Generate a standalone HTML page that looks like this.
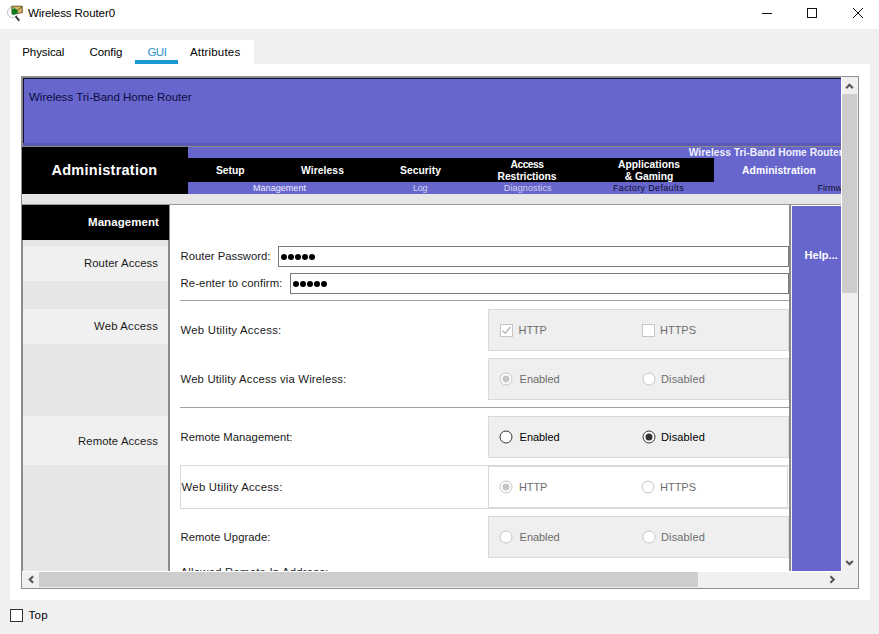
<!DOCTYPE html>
<html><head><meta charset="utf-8"><style>
html,body{margin:0;padding:0;}
body{width:879px;height:634px;overflow:hidden;background:#f0f0f0;position:relative;font-family:"Liberation Sans", sans-serif;}
</style></head><body>
<div style="position:absolute;left:0px;top:0px;width:879px;height:29px;background:#fff;"></div><div style="position:absolute;left:28.00px;top:8.37px;font-size:11.5px;line-height:11.5px;font-weight:normal;color:#000;letter-spacing:-0.075px;white-space:pre;">Wireless Router0</div><div style="position:absolute;left:10px;top:40px;width:244px;height:24px;background:#fff;"></div><div style="position:absolute;left:22.30px;top:47.27px;font-size:11.5px;line-height:11.5px;font-weight:normal;color:#000;letter-spacing:-0.104px;white-space:pre;">Physical</div><div style="position:absolute;left:89.40px;top:47.27px;font-size:11.5px;line-height:11.5px;font-weight:normal;color:#000;letter-spacing:-0.042px;white-space:pre;">Config</div><div style="position:absolute;left:147.40px;top:47.27px;font-size:11.5px;line-height:11.5px;font-weight:normal;color:#2e90c8;letter-spacing:-0.484px;white-space:pre;">GUI</div><div style="position:absolute;left:190.00px;top:47.27px;font-size:11.5px;line-height:11.5px;font-weight:normal;color:#000;letter-spacing:0.172px;white-space:pre;">Attributes</div><div style="position:absolute;left:135px;top:60px;width:43px;height:4px;background:#1a97d5;"></div><div style="position:absolute;left:10px;top:64px;width:860px;height:536px;background:#fff;"></div><div style="position:absolute;left:21px;top:76px;width:838px;height:513px;border:1px solid #8f8f8f;box-sizing:border-box;"></div><div style="position:absolute;left:22px;top:77px;width:819px;height:70px;background:#8a8a8a;"></div><div style="position:absolute;left:23px;top:78px;width:818px;height:65px;background:#0d0d3a;"></div><div style="position:absolute;left:24px;top:79px;width:817px;height:64px;background:#6666cc;"></div><div style="position:absolute;left:23px;top:143px;width:818px;height:3px;background:#5a5ab4;"></div><div style="position:absolute;left:29.00px;top:92.27px;font-size:11.5px;line-height:11.5px;font-weight:normal;color:#0c0c40;letter-spacing:0.006px;white-space:pre;">Wireless Tri-Band Home Router</div><div style="position:absolute;left:22px;top:147px;width:166px;height:47px;background:#000;"></div><div style="position:absolute;left:51.50px;top:163.43px;font-size:14.5px;line-height:14.5px;font-weight:bold;color:#fff;letter-spacing:0.263px;white-space:pre;">Administration</div><div style="position:absolute;left:188px;top:147px;width:653px;height:11px;background:#6666cc;"></div><div style="position:absolute;left:22px;top:77px;width:819px;height:494px;overflow:hidden"><div style="position:absolute;left:666.75px;top:70.68px;font-size:10.3px;line-height:10.3px;font-weight:bold;color:#f0f0ff;letter-spacing:-0.014px;white-space:pre;">Wireless Tri-Band Home Router</div></div><div style="position:absolute;left:188px;top:158px;width:526px;height:24px;background:#000;"></div><div style="position:absolute;left:714px;top:158px;width:127px;height:24px;background:#6666cc;"></div><div style="position:absolute;left:215.95px;top:165.78px;font-size:10.3px;line-height:10.3px;font-weight:bold;color:#fff;letter-spacing:0.018px;white-space:pre;">Setup</div><div style="position:absolute;left:301.00px;top:165.78px;font-size:10.3px;line-height:10.3px;font-weight:bold;color:#fff;letter-spacing:0.092px;white-space:pre;">Wireless</div><div style="position:absolute;left:400.00px;top:165.78px;font-size:10.3px;line-height:10.3px;font-weight:bold;color:#fff;letter-spacing:0.045px;white-space:pre;">Security</div><div style="position:absolute;left:510.50px;top:159.78px;font-size:10.3px;line-height:10.3px;font-weight:bold;color:#fff;letter-spacing:-0.513px;white-space:pre;">Access</div><div style="position:absolute;left:497.50px;top:171.78px;font-size:10.3px;line-height:10.3px;font-weight:bold;color:#fff;letter-spacing:-0.043px;white-space:pre;">Restrictions</div><div style="position:absolute;left:618.00px;top:159.78px;font-size:10.3px;line-height:10.3px;font-weight:bold;color:#fff;letter-spacing:0.017px;white-space:pre;">Applications</div><div style="position:absolute;left:624.80px;top:171.78px;font-size:10.3px;line-height:10.3px;font-weight:bold;color:#fff;letter-spacing:-0.030px;white-space:pre;">&amp; Gaming</div><div style="position:absolute;left:742.00px;top:165.58px;font-size:10.3px;line-height:10.3px;font-weight:bold;color:#fff;letter-spacing:0.096px;white-space:pre;">Administration</div><div style="position:absolute;left:188px;top:182px;width:653px;height:12px;background:#6666cc;"></div><div style="position:absolute;left:253.00px;top:183.58px;font-size:9px;line-height:9px;font-weight:normal;color:#eeeeff;letter-spacing:0.045px;white-space:pre;">Management</div><div style="position:absolute;left:412.95px;top:183.58px;font-size:9px;line-height:9px;font-weight:normal;color:#d2d2ee;letter-spacing:-0.177px;white-space:pre;">Log</div><div style="position:absolute;left:503.75px;top:183.58px;font-size:9px;line-height:9px;font-weight:normal;color:#d2d2ee;letter-spacing:0.134px;white-space:pre;">Diagnostics</div><div style="position:absolute;left:613.00px;top:183.58px;font-size:9px;line-height:9px;font-weight:normal;color:#10102e;letter-spacing:0.342px;white-space:pre;">Factory Defaults</div><div style="position:absolute;left:22px;top:77px;width:819px;height:494px;overflow:hidden"><div style="position:absolute;left:795.50px;top:106.58px;font-size:9px;line-height:9px;font-weight:normal;color:#10102e;letter-spacing:0.000px;white-space:pre;">Firmware Upgrade</div></div><div style="position:absolute;left:22px;top:194px;width:819px;height:10px;background:#e6e6e6;"></div><div style="position:absolute;left:22px;top:204px;width:819px;height:1px;background:#9a9a9a;"></div><div style="position:absolute;left:22px;top:205px;width:148px;height:366px;background:#e6e6e6;"></div><div style="position:absolute;left:22px;top:205px;width:1px;height:366px;background:#8a8a8a;"></div><div style="position:absolute;left:168px;top:205px;width:2px;height:366px;background:#8a8a8a;"></div><div style="position:absolute;left:22px;top:205px;width:147px;height:35px;background:#000;"></div><div style="position:absolute;left:88.00px;top:217.27px;font-size:11.5px;line-height:11.5px;font-weight:bold;color:#fff;letter-spacing:0.070px;white-space:pre;">Management</div><div style="position:absolute;left:23px;top:246px;width:145px;height:35px;background:#f0f0f0;"></div><div style="position:absolute;left:84.00px;top:258.43px;font-size:11.3px;line-height:11.3px;font-weight:normal;color:#1a1a1a;letter-spacing:0.089px;white-space:pre;">Router Access</div><div style="position:absolute;left:23px;top:309px;width:145px;height:35px;background:#f0f0f0;"></div><div style="position:absolute;left:94.00px;top:321.03px;font-size:11.3px;line-height:11.3px;font-weight:normal;color:#1a1a1a;letter-spacing:0.205px;white-space:pre;">Web Access</div><div style="position:absolute;left:23px;top:416px;width:145px;height:49px;background:#f0f0f0;"></div><div style="position:absolute;left:78.00px;top:436.43px;font-size:11.3px;line-height:11.3px;font-weight:normal;color:#1a1a1a;letter-spacing:0.117px;white-space:pre;">Remote Access</div><div style="position:absolute;left:170px;top:205px;width:619px;height:366px;background:#fff;"></div><div style="position:absolute;left:789px;top:205px;width:2px;height:366px;background:#8a8a8a;"></div><div style="position:absolute;left:791px;top:205px;width:1px;height:366px;background:#f4f4f4;"></div><div style="position:absolute;left:792px;top:206px;width:49px;height:365px;background:#6666cc;"></div><div style="position:absolute;left:804.50px;top:250.39px;font-size:11px;line-height:11px;font-weight:bold;color:#fff;letter-spacing:0.069px;white-space:pre;">Help...</div><div style="position:absolute;left:180.50px;top:251.43px;font-size:11.3px;line-height:11.3px;font-weight:normal;color:#1a1a1a;letter-spacing:0.013px;white-space:pre;">Router Password:</div><div style="position:absolute;left:278px;top:246px;width:511px;height:21px;background:#fff;border:1px solid #7a7a7a;box-sizing:border-box;"></div><div style="position:absolute;left:180.50px;top:278.43px;font-size:11.3px;line-height:11.3px;font-weight:normal;color:#1a1a1a;letter-spacing:0.109px;white-space:pre;">Re-enter to confirm:</div><div style="position:absolute;left:290px;top:273px;width:499px;height:21px;background:#fff;border:1px solid #7a7a7a;box-sizing:border-box;"></div><div style="position:absolute;left:281.3px;top:253.8px;width:6px;height:6px;border-radius:50%;background:#000"></div><div style="position:absolute;left:288.3px;top:253.8px;width:6px;height:6px;border-radius:50%;background:#000"></div><div style="position:absolute;left:295.3px;top:253.8px;width:6px;height:6px;border-radius:50%;background:#000"></div><div style="position:absolute;left:302.3px;top:253.8px;width:6px;height:6px;border-radius:50%;background:#000"></div><div style="position:absolute;left:309.3px;top:253.8px;width:6px;height:6px;border-radius:50%;background:#000"></div><div style="position:absolute;left:293.3px;top:280.8px;width:6px;height:6px;border-radius:50%;background:#000"></div><div style="position:absolute;left:300.3px;top:280.8px;width:6px;height:6px;border-radius:50%;background:#000"></div><div style="position:absolute;left:307.3px;top:280.8px;width:6px;height:6px;border-radius:50%;background:#000"></div><div style="position:absolute;left:314.3px;top:280.8px;width:6px;height:6px;border-radius:50%;background:#000"></div><div style="position:absolute;left:321.3px;top:280.8px;width:6px;height:6px;border-radius:50%;background:#000"></div><div style="position:absolute;left:180px;top:300px;width:609px;height:1px;background:#a0a0a0;"></div><div style="position:absolute;left:488px;top:309px;width:301px;height:42px;background:#efefef;border:1px solid #d9d9d9;box-sizing:border-box;"></div><div style="position:absolute;left:180.50px;top:325.43px;font-size:11.3px;line-height:11.3px;font-weight:normal;color:#1a1a1a;letter-spacing:0.271px;white-space:pre;">Web Utility Access:</div><div style="position:absolute;left:488px;top:358px;width:301px;height:42px;background:#efefef;border:1px solid #d9d9d9;box-sizing:border-box;"></div><div style="position:absolute;left:180.50px;top:373.63px;font-size:11.3px;line-height:11.3px;font-weight:normal;color:#1a1a1a;letter-spacing:0.191px;white-space:pre;">Web Utility Access via Wireless:</div><div style="position:absolute;left:180px;top:407px;width:609px;height:1px;background:#a0a0a0;"></div><div style="position:absolute;left:488px;top:416px;width:301px;height:42px;background:#efefef;border:1px solid #d9d9d9;box-sizing:border-box;"></div><div style="position:absolute;left:180.50px;top:432.43px;font-size:11.3px;line-height:11.3px;font-weight:normal;color:#1a1a1a;letter-spacing:0.012px;white-space:pre;">Remote Management:</div><div style="position:absolute;left:180px;top:465px;width:609px;height:44px;background:#fff;border:1px solid #d9d9d9;border-right:none;box-sizing:border-box;"></div><div style="position:absolute;left:488px;top:466px;width:300px;height:42px;background:#fff;border:1px solid #d9d9d9;box-sizing:border-box;"></div><div style="position:absolute;left:181.60px;top:482.43px;font-size:11.3px;line-height:11.3px;font-weight:normal;color:#1a1a1a;letter-spacing:0.271px;white-space:pre;">Web Utility Access:</div><div style="position:absolute;left:488px;top:516px;width:301px;height:42px;background:#efefef;border:1px solid #d9d9d9;box-sizing:border-box;"></div><div style="position:absolute;left:180.50px;top:532.43px;font-size:11.3px;line-height:11.3px;font-weight:normal;color:#1a1a1a;letter-spacing:0.055px;white-space:pre;">Remote Upgrade:</div><div style="position:absolute;left:22px;top:77px;width:819px;height:494px;overflow:hidden"><div style="position:absolute;left:158.50px;top:490.43px;font-size:11.3px;line-height:11.3px;font-weight:normal;color:#1a1a1a;letter-spacing:0.234px;white-space:pre;">Allowed Remote Ip Address:</div></div><div style="position:absolute;left:500px;top:324px;width:13px;height:13px;box-sizing:border-box;border:1px solid #c6c6c6;background:#fff"></div><svg style="position:absolute;left:500px;top:324px" width="13" height="13"><path d="M2.5 6.5 L5.2 9.2 L10.5 3" stroke="#b8b8b8" stroke-width="1.4" fill="none"/></svg><div style="position:absolute;left:518.60px;top:324.69px;font-size:11px;line-height:11px;font-weight:normal;color:#6d6d6d;letter-spacing:-0.134px;white-space:pre;">HTTP</div><div style="position:absolute;left:642px;top:324px;width:13px;height:13px;box-sizing:border-box;border:1px solid #c6c6c6;background:#fff"></div><div style="position:absolute;left:660.00px;top:324.69px;font-size:11px;line-height:11px;font-weight:normal;color:#6d6d6d;letter-spacing:-0.013px;white-space:pre;">HTTPS</div><svg style="position:absolute;left:499px;top:372px" width="14" height="14"><circle cx="7" cy="7" r="6" fill="#fff" stroke="#c6c6c6" stroke-width="1"/><circle cx="7" cy="7" r="3.5" fill="#c6c6c6"/></svg><div style="position:absolute;left:519.60px;top:373.89px;font-size:11px;line-height:11px;font-weight:normal;color:#6d6d6d;letter-spacing:-0.054px;white-space:pre;">Enabled</div><svg style="position:absolute;left:641.5px;top:372px" width="14" height="14"><circle cx="7" cy="7" r="6" fill="#fff" stroke="#c6c6c6" stroke-width="1"/></svg><div style="position:absolute;left:661.00px;top:373.89px;font-size:11px;line-height:11px;font-weight:normal;color:#6d6d6d;letter-spacing:0.148px;white-space:pre;">Disabled</div><svg style="position:absolute;left:499px;top:430px" width="14" height="14"><circle cx="7" cy="7" r="6" fill="#fff" stroke="#333" stroke-width="1"/></svg><div style="position:absolute;left:519.60px;top:431.69px;font-size:11px;line-height:11px;font-weight:normal;color:#000;letter-spacing:-0.054px;white-space:pre;">Enabled</div><svg style="position:absolute;left:641.5px;top:430px" width="14" height="14"><circle cx="7" cy="7" r="6" fill="#fff" stroke="#333" stroke-width="1"/><circle cx="7" cy="7" r="3.5" fill="#333"/></svg><div style="position:absolute;left:661.00px;top:431.69px;font-size:11px;line-height:11px;font-weight:normal;color:#000;letter-spacing:0.148px;white-space:pre;">Disabled</div><svg style="position:absolute;left:499px;top:480px" width="14" height="14"><circle cx="7" cy="7" r="6" fill="#fff" stroke="#c6c6c6" stroke-width="1"/><circle cx="7" cy="7" r="3.5" fill="#c6c6c6"/></svg><div style="position:absolute;left:519.00px;top:481.69px;font-size:11px;line-height:11px;font-weight:normal;color:#6d6d6d;letter-spacing:-0.134px;white-space:pre;">HTTP</div><svg style="position:absolute;left:640.5px;top:480px" width="14" height="14"><circle cx="7" cy="7" r="6" fill="#fff" stroke="#c6c6c6" stroke-width="1"/></svg><div style="position:absolute;left:660.00px;top:481.69px;font-size:11px;line-height:11px;font-weight:normal;color:#6d6d6d;letter-spacing:-0.013px;white-space:pre;">HTTPS</div><svg style="position:absolute;left:499px;top:530px" width="14" height="14"><circle cx="7" cy="7" r="6" fill="#fff" stroke="#c6c6c6" stroke-width="1"/></svg><div style="position:absolute;left:519.60px;top:531.69px;font-size:11px;line-height:11px;font-weight:normal;color:#6d6d6d;letter-spacing:-0.054px;white-space:pre;">Enabled</div><svg style="position:absolute;left:641.5px;top:530px" width="14" height="14"><circle cx="7" cy="7" r="6" fill="#fff" stroke="#c6c6c6" stroke-width="1"/></svg><div style="position:absolute;left:661.00px;top:531.69px;font-size:11px;line-height:11px;font-weight:normal;color:#6d6d6d;letter-spacing:0.148px;white-space:pre;">Disabled</div><div style="position:absolute;left:841px;top:77px;width:17px;height:495px;background:#f0f0f0;"></div><div style="position:absolute;left:841px;top:77px;width:1px;height:495px;background:#fff;"></div><div style="position:absolute;left:842px;top:94px;width:15px;height:199px;background:#cdcdcd;"></div><div style="position:absolute;left:22px;top:571px;width:836px;height:17px;background:#f0f0f0;"></div><div style="position:absolute;left:22px;top:571px;width:820px;height:1px;background:#fff;"></div><div style="position:absolute;left:39px;top:572px;width:659px;height:15px;background:#cdcdcd;"></div><svg style="position:absolute;left:0;top:0" width="879" height="634"><path d="M846.2 88.19999999999999 L849.5 84.8 L852.8 88.19999999999999" stroke="#555" stroke-width="2.1" fill="none"/></svg><svg style="position:absolute;left:0;top:0" width="879" height="634"><path d="M846.2 560.9 L849.5 564.3 L852.8 560.9" stroke="#555" stroke-width="2.1" fill="none"/></svg><svg style="position:absolute;left:0;top:0" width="879" height="634"><path d="M33.1 576.2 L29.7 579.5 L33.1 582.8" stroke="#555" stroke-width="2.1" fill="none"/></svg><svg style="position:absolute;left:0;top:0" width="879" height="634"><path d="M830.4 576.2 L833.8 579.5 L830.4 582.8" stroke="#555" stroke-width="2.1" fill="none"/></svg><div style="position:absolute;left:10px;top:609px;width:13px;height:13px;box-sizing:border-box;border:1px solid #333;background:#fff"></div><div style="position:absolute;left:28.60px;top:609.57px;font-size:11.5px;line-height:11.5px;font-weight:normal;color:#000;letter-spacing:0.218px;white-space:pre;">Top</div><svg style="position:absolute;left:0;top:0" width="879" height="30">
<circle cx="12.5" cy="12.5" r="5.2" fill="#fafafa" stroke="#c4c4c4" stroke-width="1"/>
<path d="M11.8 6.2 L22.2 6.2 L22.2 12.6 L16.5 13.6 L12 13.6 Z" fill="#d9b866" stroke="#5e4516" stroke-width="0.9"/>
<path d="M12.3 6.8 L17 10.6 L22 6.8" fill="none" stroke="#6b5220" stroke-width="0.9"/>
<path d="M12 8 Q15.5 7.5 18.2 11.5 Q17 14.5 13.5 15 L12 14.5 Z" fill="#107a1c"/>
<path d="M12.5 7.3 L14.5 8.5 L12.6 9.5 Z" fill="#9ad88a"/>
<path d="M15.6 16.2 L19.2 20.6" stroke="#222" stroke-width="1.7"/>
<path d="M762 13.5 H772" stroke="#111" stroke-width="1"/>
<rect x="807.5" y="8.5" width="9" height="9" fill="none" stroke="#111" stroke-width="1"/>
<path d="M853 8 L863 18 M863 8 L853 18" stroke="#111" stroke-width="1"/>
</svg>
</body></html>
